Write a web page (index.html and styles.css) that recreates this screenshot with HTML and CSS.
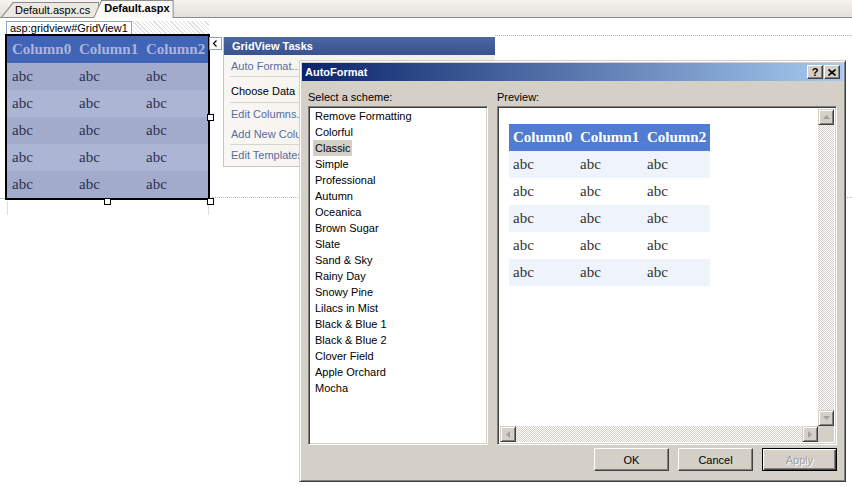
FILE: index.html
```html
<!DOCTYPE html>
<html>
<head>
<meta charset="utf-8">
<link rel="stylesheet" href="styles.css">
</head>
<body>
<div class="tabbar">
  <div class="tab"><span>Default.aspx.cs</span></div>
  <div class="tab active"><span>Default.aspx</span></div>
</div>
<div class="surface">
  <div class="guide guide-top"></div>
  <div class="guide guide-bottom"></div>
  <div class="guide-v guide-v1"></div>
  <div class="guide-v guide-v2"></div>
  <div class="guide-h"></div>

  <div class="tagstrip"><span class="tag">asp:gridview#GridView1</span></div>

  <div class="gv">
    <table class="gvtable">
      <tr><th>Column0</th><th>Column1</th><th>Column2</th></tr>
      <tr class="odd"><td>abc</td><td>abc</td><td>abc</td></tr>
      <tr class="even"><td>abc</td><td>abc</td><td>abc</td></tr>
      <tr class="odd"><td>abc</td><td>abc</td><td>abc</td></tr>
      <tr class="even"><td>abc</td><td>abc</td><td>abc</td></tr>
      <tr class="odd"><td>abc</td><td>abc</td><td>abc</td></tr>
    </table>
    <span class="handle h-rm"></span>
    <span class="handle h-bm"></span>
    <span class="handle h-br"></span>
  </div>

  <div class="smarttag"><svg width="11" height="11" viewBox="0 0 11 11"><polyline points="6.5,2.5 3.5,5.5 6.5,8.5" fill="none" stroke="#000" stroke-width="1.2"/></svg></div>

  <div class="tasks">
    <div class="tasks-head">GridView Tasks</div>
    <div class="tasks-body">
      <div class="sec sec1"><div class="item link">Auto Format...</div></div>
      <div class="sec sec2"><div class="item">Choose Data Source:</div></div>
      <div class="sec sec3"><div class="item link">Edit Columns...</div><div class="item link">Add New Column...</div></div>
      <div class="sec sec4"><div class="item link">Edit Templates</div></div>
    </div>
  </div>

  <div class="dialog">
    <div class="title">
      <span class="title-text">AutoFormat</span>
      <span class="tbtn help">?</span>
      <span class="tbtn close"><svg width="8" height="7" viewBox="0 0 8 7"><path d="M0.5 0.5 L7.5 6.5 M7.5 0.5 L0.5 6.5" stroke="#000" stroke-width="1.6"/></svg></span>
    </div>
    <div class="dlg-body">
      <div class="lbl">Select a scheme:</div>
      <div class="lbl">Preview:</div>
      <div class="listbox sunken">
        <div class="opt"><span>Remove Formatting</span></div>
        <div class="opt"><span>Colorful</span></div>
        <div class="opt selected"><span>Classic</span></div>
        <div class="opt"><span>Simple</span></div>
        <div class="opt"><span>Professional</span></div>
        <div class="opt"><span>Autumn</span></div>
        <div class="opt"><span>Oceanica</span></div>
        <div class="opt"><span>Brown Sugar</span></div>
        <div class="opt"><span>Slate</span></div>
        <div class="opt"><span>Sand &amp; Sky</span></div>
        <div class="opt"><span>Rainy Day</span></div>
        <div class="opt"><span>Snowy Pine</span></div>
        <div class="opt"><span>Lilacs in Mist</span></div>
        <div class="opt"><span>Black &amp; Blue 1</span></div>
        <div class="opt"><span>Black &amp; Blue 2</span></div>
        <div class="opt"><span>Clover Field</span></div>
        <div class="opt"><span>Apple Orchard</span></div>
        <div class="opt"><span>Mocha</span></div>
      </div>
      <div class="preview sunken">
        <div class="pv-area">
          <table class="pvtable">
            <tr><th>Column0</th><th>Column1</th><th>Column2</th></tr>
            <tr class="alt"><td>abc</td><td>abc</td><td>abc</td></tr>
            <tr><td>abc</td><td>abc</td><td>abc</td></tr>
            <tr class="alt"><td>abc</td><td>abc</td><td>abc</td></tr>
            <tr><td>abc</td><td>abc</td><td>abc</td></tr>
            <tr class="alt"><td>abc</td><td>abc</td><td>abc</td></tr>
          </table>
        </div>
        <div class="vscroll">
          <div class="sbtn"><svg width="7" height="4" viewBox="0 0 7 4"><polygon points="0,4 7,4 3.5,0" fill="#a0a0a0"/></svg></div>
          <div class="track"></div>
          <div class="sbtn"><svg width="7" height="4" viewBox="0 0 7 4"><polygon points="0,0 7,0 3.5,4" fill="#a0a0a0"/></svg></div>
        </div>
        <div class="hscroll">
          <div class="sbtn"><svg width="4" height="7" viewBox="0 0 4 7"><polygon points="4,0 4,7 0,3.5" fill="#a0a0a0"/></svg></div>
          <div class="track"></div>
          <div class="sbtn"><svg width="4" height="7" viewBox="0 0 4 7"><polygon points="0,0 0,7 4,3.5" fill="#a0a0a0"/></svg></div>
        </div>
        <div class="corner"></div>
      </div>
    </div>
    <div class="buttons">
      <div class="btn">OK</div>
      <div class="btn">Cancel</div>
      <div class="btn default disabled">Apply</div>
    </div>
  </div>
</div>
</body>
</html>
```
FILE: styles.css
```css
html, body {
  margin: 0;
  padding: 0;
}
body {
  width: 852px;
  height: 487px;
  overflow: hidden;
  background: #fff;
  font-family: "Liberation Sans", Arial, sans-serif;
  font-size: 11px;
  color: #000;
}

/* tab bar */
.tabbar {
  height: 17px;
  border-bottom: 1px solid #8c8c8c;
  background: linear-gradient(#f4f3ef, #e2e0d8);
  display: flex;
  align-items: flex-end;
  padding-left: 1px;
}
.tab {
  height: 15px;
  background: #8c8c8c;
  clip-path: polygon(12px 0, 100% 0, 100% 100%, 0 100%);
}
.tab span {
  display: block;
  height: 15px;
  line-height: 16px;
  padding: 0 9px 0 14px;
  background: #ebe9e2;
  clip-path: polygon(12.7px 1px, calc(100% - 1px) 1px, calc(100% - 1px) 100%, 1.4px 100%);
}
.tab.active {
  position: relative;
  z-index: 1;
  margin-left: -6px;
  margin-bottom: -1px;
  height: 18px;
  clip-path: polygon(8px 0, 100% 0, 100% 100%, 0 100%);
}
.tab.active span {
  height: 18px;
  line-height: 17px;
  padding: 0 4px 0 11px;
  font-weight: bold;
  background: #faf9f6;
  clip-path: polygon(8.7px 1px, calc(100% - 1px) 1px, calc(100% - 1px) 100%, 1px 100%);
}

/* design surface */
.surface {
  position: relative;
  height: 469px;
}
.guide {
  position: absolute;
  height: 0;
  border-top: 1px dotted #b4b4b4;
}
.guide-top { left: 495px; right: 0; top: 17px; }
.guide-bottom { left: 212px; right: 0; top: 179px; }
.guide-v {
  position: absolute;
  width: 0;
  border-left: 1px solid #dcdcdc;
}
.guide-v1 { left: 208px; top: 183px; height: 14px; }
.guide-v2 { left: 7px; top: 183px; height: 14px; }
.guide-h {
  position: absolute;
  left: 0;
  top: 180px;
  width: 5px;
  border-top: 1px solid #c8c8c8;
}

.tagstrip {
  position: absolute;
  left: 6px;
  top: 3px;
  width: 203px;
  height: 13px;
  background: repeating-linear-gradient(45deg, #fff 0 2px, #dedede 2px 3px);
  display: flex;
}
.tag {
  height: 13px;
  box-sizing: border-box;
  line-height: 12px;
  padding: 0 3px;
  border: 1px solid #8ea2c6;
  border-bottom: none;
  background: #fff;
}

/* gridview on the designer */
.gv {
  position: absolute;
  left: 5px;
  top: 16px;
  border: 2px solid #000;
}
.gvtable, .pvtable {
  border-collapse: collapse;
  table-layout: fixed;
  width: 201px;
  font-family: "Liberation Serif", "Times New Roman", serif;
  font-size: 15px;
}
.gvtable th, .gvtable td,
.pvtable th, .pvtable td {
  box-sizing: border-box;
  width: 67px;
  height: 27px;
  padding: 0 0 0 5px;
  text-align: left;
  white-space: nowrap;
  overflow: hidden;
}
.gvtable th {
  background: #4264b6;
  color: #aab4de;
  font-weight: bold;
}
.gvtable td { color: #2b3150; }
.gvtable tr.odd { background: #a3abcc; }
.gvtable tr.even { background: #adb5d4; }

.handle {
  position: absolute;
  width: 5px;
  height: 5px;
  border: 1px solid #000;
  background: #fff;
}
.h-rm { left: 200px; top: 78px; }
.h-bm { left: 97px; top: 162px; }
.h-br { left: 200px; top: 162px; }

.smarttag {
  position: absolute;
  left: 209px;
  top: 19px;
  width: 11px;
  height: 11px;
  border: 1px solid #8ea2c6;
  background: #fff;
  display: flex;
}

/* smart tag panel */
.tasks {
  position: absolute;
  left: 223px;
  top: 19px;
  width: 271px;
  border-left: 1px solid #c6c6c6;
  border-bottom: 1px solid #c6c6c6;
}
.tasks-head {
  height: 18px;
  line-height: 18px;
  padding-left: 8px;
  background: linear-gradient(#4c67a2, #37528c);
  color: #fff;
  font-weight: bold;
}
.tasks-body {
  background: linear-gradient(to right, #f8f7f3, #efeee8);
  height: 111px;
}
.sec {
  margin-left: 6px;
  border-bottom: 1px solid #d6d5cf;
}
.sec4 { border-bottom: none; }
.sec1 { padding-top: 1px; }
.sec2 { padding: 4px 0 1px; }
.sec3 { padding-top: 1px; }
.item {
  height: 20px;
  line-height: 20px;
  padding-left: 1px;
  white-space: nowrap;
}
.item.link { color: #5a6c9f; }

/* dialog */
.dialog {
  position: absolute;
  left: 299px;
  top: 42px;
  width: 547px;
  height: 422px;
  box-sizing: border-box;
  background: #d4d0c8;
  border: 1px solid;
  border-color: #d4d0c8 #404040 #404040 #d4d0c8;
  box-shadow: inset 1px 1px #fff, inset -1px -1px #808080;
  padding: 2px;
  display: flex;
  flex-direction: column;
}
.title {
  height: 18px;
  background: linear-gradient(to right, #0a246a, #a6caf0);
  color: #fff;
  font-weight: bold;
  display: flex;
  align-items: center;
  padding: 0 3px 0 3px;
}
.title-text { flex: 1; }
.tbtn {
  width: 14px;
  height: 12px;
  background: #d4d0c8;
  border: 1px solid;
  border-color: #fff #404040 #404040 #fff;
  box-shadow: inset -1px -1px #808080;
  color: #000;
  font-size: 11px;
  font-weight: bold;
  line-height: 12px;
  display: flex;
  align-items: center;
  justify-content: center;
}
.tbtn.close { margin-left: 1px; }

.dlg-body {
  padding: 10px 6px 0 6px;
  display: grid;
  grid-template-columns: 180px 340px;
  grid-template-rows: 15px 339px;
  column-gap: 9px;
}
.lbl {
  line-height: 13px;
}
.sunken {
  box-sizing: border-box;
  border: 1px solid;
  border-color: #808080 #fff #fff #808080;
  box-shadow: inset 1px 1px #404040, inset -1px -1px #d4d0c8;
  background: #fff;
}
.listbox {
  padding: 1px 2px 2px 4px;
}
.opt {
  height: 16px;
  line-height: 16px;
}
.opt span {
  display: inline-block;
  padding: 0 2px;
}
.opt.selected span { background: #d4d0c8; }

.preview {
  padding: 2px;
  display: grid;
  grid-template-columns: 1fr 16px;
  grid-template-rows: 1fr 16px;
}
.pv-area {
  padding: 15px 0 0 9px;
  overflow: hidden;
}
.pvtable th, .pvtable td { padding-left: 4px; }
.pvtable th {
  background: #507cd1;
  color: #fff;
  font-weight: bold;
}
.pvtable td { color: #333; }
.pvtable tr.alt { background: #eff3fb; }

.vscroll {
  display: flex;
  flex-direction: column;
}
.hscroll {
  display: flex;
}
.track {
  flex: 1;
  background: repeating-conic-gradient(#d4d0c8 0 25%, #fff 0 50%) 0 0 / 2px 2px;
}
.sbtn {
  width: 16px;
  height: 16px;
  box-sizing: border-box;
  background: #d4d0c8;
  border: 1px solid;
  border-color: #d4d0c8 #404040 #404040 #d4d0c8;
  box-shadow: inset 1px 1px #fff, inset -1px -1px #808080;
  display: flex;
  align-items: center;
  justify-content: center;
}
.corner { background: #d4d0c8; }

.buttons {
  display: flex;
  justify-content: flex-end;
  gap: 9px;
  padding: 3px 6px 0 0;
}
.btn {
  width: 75px;
  height: 23px;
  box-sizing: border-box;
  border: 1px solid;
  border-color: #fff #404040 #404040 #fff;
  box-shadow: inset -1px -1px #808080;
  display: flex;
  align-items: center;
  justify-content: center;
}
.btn.default {
  border: 1px solid #000;
  box-shadow: inset 1px 1px #fff, inset -1px -1px #404040, inset -2px -2px #808080;
}
.btn.disabled {
  color: #a0a0a0;
  text-shadow: 1px 1px #fff;
}
```
